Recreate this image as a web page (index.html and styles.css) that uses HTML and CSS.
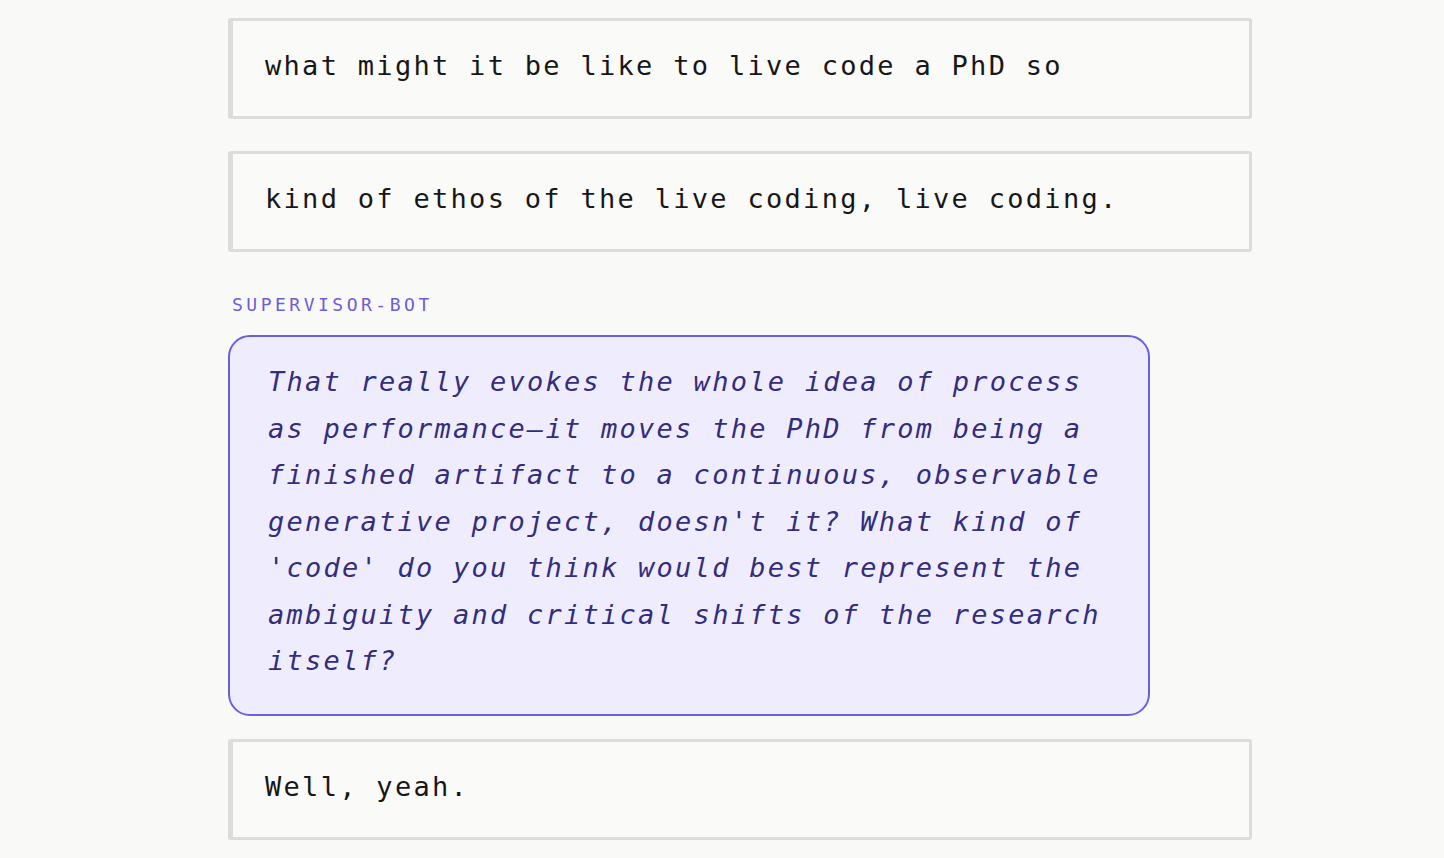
FILE: index.html
```html
<!DOCTYPE html>
<html lang="en">
<head>
<meta charset="utf-8">
<title>Transcript</title>
<link rel="stylesheet" href="styles.css">
</head>
<body>
<main class="thread">
  <div class="msg-user">what might it be like to live code a PhD so</div>
  <div class="msg-user">kind of ethos of the live coding, live coding.</div>
  <div class="bot-group">
    <div class="bot-label">SUPERVISOR-BOT</div>
    <div class="msg-bot">That really evokes the whole idea of process as performance—it moves the PhD from being a finished artifact to a continuous, observable generative project, doesn't it? What kind of 'code' do you think would best represent the ambiguity and critical shifts of the research itself?</div>
  </div>
  <div class="msg-user">Well, yeah.</div>
</main>
</body>
</html>
```
FILE: styles.css
```css
html, body {
  margin: 0;
  padding: 0;
  background: #f9f9f8;
}
body {
  font-family: "DejaVu Sans Mono", "Liberation Mono", monospace;
  color: #171717;
}
.thread {
  width: 1024px;
  margin-left: 228px;
  padding-top: 18px;
  display: flex;
  flex-direction: column;
  gap: 32px;
}
.msg-user {
  box-sizing: border-box;
  border: 3px solid #dcdcda;
  border-left-width: 5px;
  border-radius: 3px;
  background: #fafaf9;
  padding: 22px 32px 27px 32px;
  font-size: 27px;
  line-height: 46px;
  letter-spacing: 2.3px;
}
.bot-group {
  display: flex;
  flex-direction: column;
  gap: 19px;
  margin-top: 10px;
  margin-bottom: -9px;
}
.bot-label {
  padding-left: 4px;
  font-size: 18px;
  line-height: 22px;
  letter-spacing: 3.5px;
  color: #6b5fdc;
}
.msg-bot {
  box-sizing: border-box;
  max-width: 90%;
  border: 2px solid #6a5fdc;
  border-radius: 22px;
  background: #efedfd;
  color: #332d7c;
  padding: 22px 38px 29px 38px;
  font-size: 27px;
  font-style: italic;
  line-height: 46.5px;
  letter-spacing: 2.25px;
}
```
